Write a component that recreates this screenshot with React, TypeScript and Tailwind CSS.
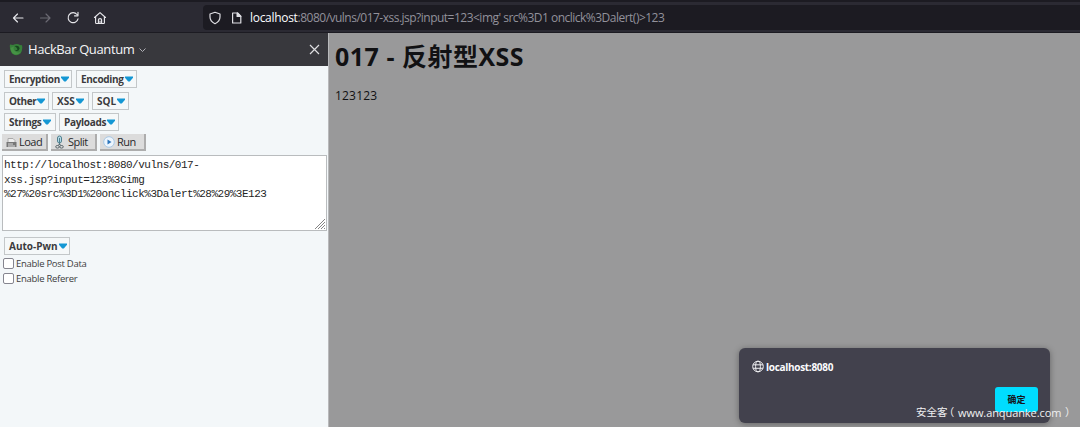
import React from "react";

const ui = "font-['Open_Sans','Noto_Sans_CJK_SC',sans-serif]";

function MenuButton({ label, width, tracking = "tracking-[-0.3px]" }: { label: string; width: string; tracking?: string }) {
  return (
    <button className={`flex h-[18px] shrink-0 items-center whitespace-nowrap border border-[#c3c7c9] bg-[#f5f8f9] pl-1 text-[10px] font-bold leading-none text-[#3b3b3d] ${width}`}>
      <span className={tracking}>{label}</span>
      <svg className="ml-px shrink-0" width="8" height="6" viewBox="0 0 8 6">
        <path d="M0 .5h8v1.3L4.8 5.5H3.2L0 1.8z" fill="#1497d4" />
      </svg>
    </button>
  );
}

function ToolButton({ label, children }: { label: string; children: React.ReactNode }) {
  return (
    <button className="flex h-[17px] w-[46px] shrink-0 items-center border-b-2 border-r-2 border-b-[#adadad] border-r-[#adadad] bg-[#dcdcdc] pl-[3px] text-[11px] leading-none text-[#29292b]">
      <svg className="mr-0.5 shrink-0" width="12" height="14" viewBox="0 0 12 14">{children}</svg>
      <span className="tracking-[-0.5px]">{label}</span>
    </button>
  );
}

function CheckRow({ label }: { label: string }) {
  return (
    <label className="flex h-[15px] items-center gap-[2px] pl-[3px]">
      <span className="h-[11px] w-[11px] rounded-[2px] border border-[#85858f] bg-white" />
      <span className="whitespace-nowrap text-[9.5px] leading-none tracking-[-0.28px] text-[#3d3d40]">{label}</span>
    </label>
  );
}

function Toolbar() {
  return (
    <header className="flex h-[33px] shrink-0 border-b border-t-2 border-b-[#1c1b22] border-t-[#1c1b22] bg-[#2b2a33] pt-[2px]">
      <nav className="flex w-[203px] items-center pl-3">
        <svg width="96" height="16" viewBox="0 0 96 16" fill="none" stroke="#e8e8ec" strokeWidth="1.15" strokeLinecap="round" strokeLinejoin="round">
          <path d="M11 8H1.500M5.500 4l-4 4 4 4" />
          <path d="M28.500 8H38M34 4l4 4-4 4" stroke="#6b6a73" />
          <path d="M65 4.500A5 5 0 1 0 66 8.800M66 2.300v3.500h-3.500" />
          <path d="M82.500 7.500 88 2.600l5.500 4.900M83.600 6.800v5.900q0 .8.8.8h7.200q.8 0 .8-.8V6.800M86.400 13.500V10q0-1.400 1.600-1.400t1.600 1.400v3.500M88 11v2.500" />
        </svg>
      </nav>
      <div className="mt-px flex h-[25px] flex-1 items-center rounded-l bg-[#1c1b22] pl-1.5">
        <svg width="34" height="14" viewBox="0 0 34 14" fill="none" stroke="#dedee3" strokeWidth="1.2" strokeLinejoin="round">
          <path d="M6 1.3 11 3v3q0 4.300-5 6.700Q1 10.300 1 6V3z" />
          <path d="M23.600 2h5l3.200 3.200V12h-8.200zM28.300 2v3.500h3.500" />
          <path d="M28.300 2v3.500h3.500z" fill="#dedee3" />
        </svg>
        <p className="ml-[7px] whitespace-pre text-[12px] leading-none text-[#92919b]">
          <span className="tracking-[-0.3px] text-[#fbfbfe]">localhost</span>
          <span className="tracking-[-0.51px]">:8080/vulns/017-xss.jsp?input=123&lt;img' src%3D1 onclick%3Dalert()&gt;123</span>
        </p>
      </div>
    </header>
  );
}

function Sidebar() {
  return (
    <aside className="flex w-[329px] shrink-0 flex-col border-r border-[#b8b9bb] bg-[#f3f7f9]">
      <div className="flex h-[33px] shrink-0 items-center bg-[#38383d] pl-[9px] pr-2">
        <svg width="14" height="14" viewBox="0 0 14 14">
          <path d="M1 1.500 4 2Q8-.2 11 2l2 .2Q14 7 11.500 10.500 7 14 3 10.500.2 7 1 1.500z" fill="#37803a" />
          <path d="M1.500 5Q2 10.500 6 11.500q4 .5 6-3-3 2-5.500 0Q3.500 6.500 5 3.500 3 4 1.500 5z" fill="#469345" />
          <path d="M5.500 3q3-1 4.500.8T9.500 7.500Q7.500 8.500 6 7q2 .3 2.500-.8Q7.500 4 5.500 3z" fill="#17471f" />
        </svg>
        <h2 className="ml-[5px] whitespace-nowrap text-[13px] leading-none tracking-[-0.38px] text-[#f5f5f7]">HackBar Quantum</h2>
        <svg className="ml-[5px]" width="7" height="6" viewBox="0 0 7 6" fill="none" stroke="#b0b0b6"><path d="M.5 1.500 3.500 4.500l3-3" /></svg>
        <svg className="ml-auto" width="11" height="11" viewBox="0 0 11 11" stroke="#dedee1" strokeWidth="1.2"><path d="m1 1 9 9M10 1l-9 9" /></svg>
      </div>
      <div className="flex flex-col gap-1 pl-1 pt-1">
        <div className="flex gap-1"><MenuButton label="Encryption" width="w-[68px]" /><MenuButton label="Encoding" width="w-[61px]" /></div>
        <div className="flex gap-[3px]"><MenuButton label="Other" width="w-[45px]" tracking="tracking-[-0.4px]" /><MenuButton label="XSS" width="w-[37px]" tracking="tracking-[0px]" /><MenuButton label="SQL" width="w-[37px]" tracking="tracking-[0px]" /></div>
        <div className="-mt-px flex gap-[3px]"><MenuButton label="Strings" width="w-[52px]" /><MenuButton label="Payloads" width="w-[60px]" /></div>
      </div>
      <div className="mt-[3px] flex gap-[3px] pl-[2px]">
        <ToolButton label="Load">
          <path d="M3 7V3.500h5l2 2V7" fill="#eee" stroke="#aaa" />
          <path d="M1.500 7h10v5h-10z" fill="#777" /><path d="M3 9h5M3 11h7" stroke="#ddd" />
        </ToolButton>
        <ToolButton label="Split">
          <rect x="3.500" y="1" width="4" height="7" rx="2" fill="#b5dbe9" stroke="#51808e" />
          <path d="M5.500 3v7" stroke="#51808e" />
          <path d="M5.500 9 4 10.500M5.500 9 7 10.500" stroke="#59656a" />
          <ellipse cx="3.500" cy="11.800" rx="1.800" ry="1.300" fill="none" stroke="#59656a" />
          <ellipse cx="7.500" cy="11.800" rx="1.800" ry="1.300" fill="none" stroke="#59656a" />
        </ToolButton>
        <ToolButton label="Run">
          <circle cx="6" cy="7" r="5.300" fill="#edf5fd" stroke="#a8c8e5" />
          <path d="m4.500 4.500 4 2.500-4 2.500z" fill="#2d77bd" />
        </ToolButton>
      </div>
      <div className="ml-[2px] mt-1 flex h-[76px] w-[325px] shrink-0 border border-[#b9bcbe] bg-white pl-px pt-[2px] font-['Liberation_Mono',monospace] text-[11px] leading-[14.5px] text-[#252525]">
        <p className="whitespace-pre tracking-[-0.5px]">{"http://localhost:8080/vulns/017-\nxss.jsp?input=123%3Cimg\n%27%20src%3D1%20onclick%3Dalert%28%29%3E123"}</p>
        <svg className="ml-auto mt-auto" width="12" height="12" viewBox="0 0 12 12" stroke="#777" strokeWidth=".9"><path d="M1 11 11 1M4 11l7-7M7 11l4-4M10 11l1-1" /></svg>
      </div>
      <div className="mt-1.5 pb-px pl-1"><MenuButton label="Auto-Pwn" width="w-[66px]" tracking="tracking-[0px]" /></div>
      <CheckRow label="Enable Post Data" />
      <CheckRow label="Enable Referer" />
    </aside>
  );
}

export default function App() {
  return (
    <div className={`relative flex h-[427px] w-[1080px] flex-col overflow-hidden ${ui}`}>
      <Toolbar />
      <div className="flex min-h-0 flex-1">
        <Sidebar />
        <main className="flex-1 bg-[#99999a] pl-1.5 pt-[9px] text-[#111113]">
          <h1 className="whitespace-nowrap text-[25px] font-bold leading-[28px] tracking-[0.5px]">017 - 反射型XSS</h1>
          <p className="mt-[18px] text-[12px] leading-4 tracking-[0.2px]">123123</p>
        </main>
      </div>
      <section className="absolute left-[739px] top-[348px] flex h-[75px] w-[311px] flex-col rounded-md bg-[#42414d] px-[13px] pt-3 shadow-[0_1px_6px_rgba(0,0,0,.35)]">
        <div className="flex items-center gap-[2px]">
          <svg width="12" height="13" viewBox="0 0 12 13" fill="none" stroke="#ededf0"><circle cx="6" cy="6.500" r="5.300" /><ellipse cx="6" cy="6.500" rx="2.400" ry="5.300" /><path d="M1 4.800h10M1 8.300h10" /></svg>
          <strong className="text-[10px] leading-none tracking-[-0.3px] text-[#fbfbfe]">localhost:8080</strong>
        </div>
        <button className="-mr-px ml-auto mt-[14px] h-[25px] w-[43px] rounded-[3px] bg-[#00ddff] text-[9px] font-bold leading-none text-[#15141a]">确定</button>
      </section>
      <p className="absolute left-[916px] top-[405px] flex whitespace-nowrap text-[10.5px] leading-[15px] text-[#f1f1f2]">
        <span className="w-[33px]">安全客</span>
        <span className="w-[9px] [font-feature-settings:'halt']">（</span>
        <span className="w-[107px] text-[11px] tracking-[-0.08px]">www.anquanke.com</span>
        <span>）</span>
      </p>
    </div>
  );
}
